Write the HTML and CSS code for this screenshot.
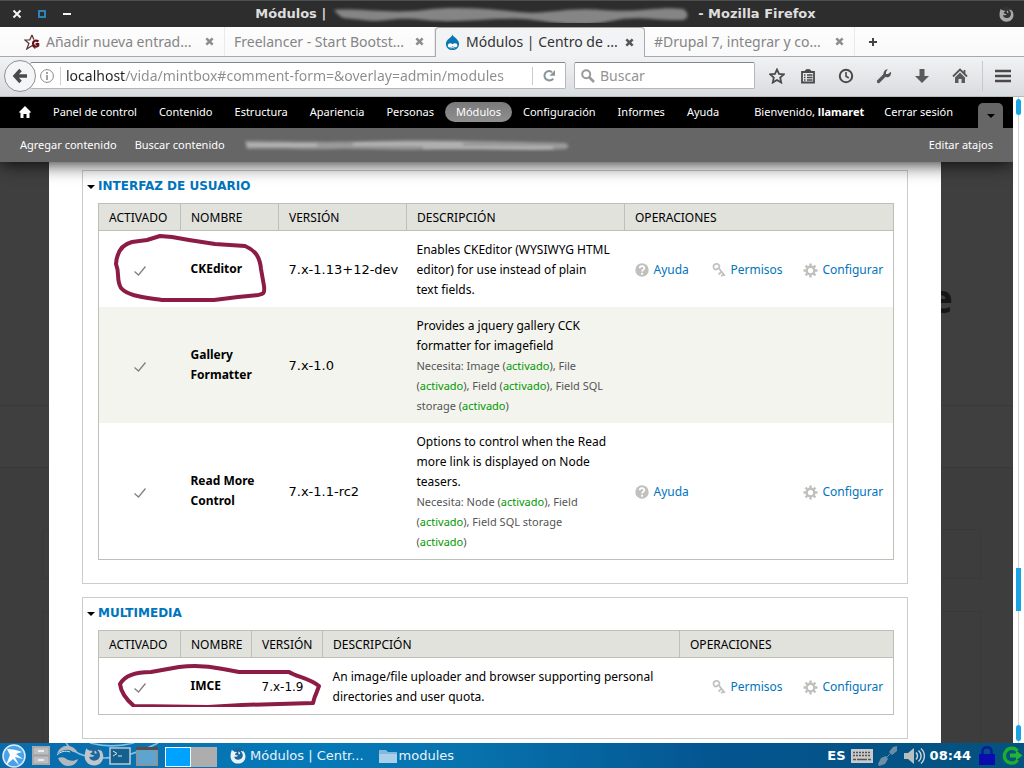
FILE: index.html
```html
<!DOCTYPE html>
<html lang="es">
<head>
<meta charset="utf-8">
<title>Módulos | Mozilla Firefox</title>
<link rel="stylesheet" href="styles.css">
</head>
<body>
<svg class="defs" aria-hidden="true">
  <defs>
    <filter id="soft" x="-5%" y="-60%" width="110%" height="220%"><feGaussianBlur stdDeviation="1.5"/></filter>
    <symbol id="close" viewBox="0 0 10 10"><path d="M1.500 1.500l7 7M8.500 1.500l-7 7" stroke="currentColor" stroke-width="2.800" fill="none"/></symbol>
    <symbol id="fox" viewBox="0 0 20 20">
      <path d="M2.500 2c.5 1.500 1.300 2 2.500 2C7 2.500 8 1 10.500 1 15.500 1 19.300 5.500 19.300 10.500c0 5.200-4 9-9.300 9S.7 15.500.7 10.500C.7 7 1.500 5 2.500 2z" fill="currentColor"/>
      <path d="M6 0C10-1 16 0 17 5c-2-1.500-2.600-1.300-3.500-1 2.700 2.500 3.300 6 1.300 8.500-2 2.600-6.300 2.800-8.300.8-1.300-1.300-1.200-2.300-.7-2.800 1.800.8 3.700.3 4.700-1-1.800-.3-3.500-.2-4.300-1.700.3-1.500 2.300-1 2.300-2.400C7.300 4.300 6 4.500 5 5c0-2 .3-3.500 1-5z" fill="var(--hole)"/>
      <path d="M10.500 4.500c1.500.5 2.500 1.700 2 3-.8.8-2 .2-2-1z" fill="currentColor"/>
    </symbol>
    <symbol id="help" viewBox="0 0 14 14"><circle cx="7" cy="7" r="6.700" fill="#c0c0bd"/><path d="M4.700 5.300C4.700 2.400 9.400 2.500 9.300 5.200 9.200 6.700 7.100 6.700 7.100 8.600M7.100 9.800v1.900" stroke="#fff" stroke-width="1.800" fill="none"/></symbol>
    <symbol id="key" viewBox="0 0 14 16"><path d="M1.500 4.800a3 2.700 0 1 1 5.600 1.100L4 7.600C2.500 7.600 1.500 6.200 1.500 4.800zM7 6.500l5 6.300M9.300 9.600l-2.600 3M11.300 12l-2 2.400M12 12.500l.5 1.500" stroke="#c2c2bf" stroke-width="1.800" fill="none"/></symbol>
    <symbol id="gear" viewBox="0 0 16 16"><circle cx="8" cy="8" r="4.100" stroke="#c0c0bd" stroke-width="2.600" fill="none"/><path d="M8 .5v3M8 12.500v3M.5 8h3M12.500 8h3M2.700 2.700l2.100 2.100M11.200 11.200l2.100 2.100M2.700 13.300l2.100-2.100M11.200 4.800l2.100-2.100" stroke="#c0c0bd" stroke-width="2.600"/></symbol>
  </defs>
</svg>

<header class="titlebar">
  <div class="win-buttons">
    <button aria-label="Cerrar"><svg width="10" height="10" viewBox="0 0 10 10"><path d="M1.500 1.500l7 7M8.500 1.500l-7 7" stroke="#f4f4f4" stroke-width="2"/></svg></button>
    <button aria-label="Maximizar"><svg width="10" height="10" viewBox="0 0 10 10"><path d="M2 2h6v6H2z" stroke="#2d83b8" stroke-width="2" fill="none"/></svg></button>
    <button aria-label="Minimizar"><svg width="10" height="10" viewBox="0 0 10 10"><path d="M1 5h8" stroke="#f4f4f4" stroke-width="2"/></svg></button>
  </div>
  <div class="title">
    <span>Módulos |</span>
    <svg width="364" height="18" viewBox="0 0 360 18" aria-hidden="true"><path filter="url(#soft)" d="M2 5C25 3 60 9 92 5s65-1 95 2 45-5 82-2 60-4 82-1c7 4 5 10 0 11-28 1-45-5-72 1s-45 3-78-1-75 4-108 0-40 3-62 0S12 16 2 5z" fill="#858585"/></svg>
    <span>- Mozilla Firefox</span>
  </div>
  <svg class="fox-mark" width="15" height="15"><use href="#fox"/></svg>
</header>

<nav class="tabs" aria-label="Pestañas">
  <div class="tab"><svg width="16" height="16" viewBox="0 0 16 16"><path d="M8 1L5.800 5.800.8 6l4.100 3.500L2.800 15l5.500-3.500 3 3M8 1l1.800 4.500" stroke="#5b3030" stroke-width="1.200" fill="none"/><path d="M14.500 7.500c-3-2-5.500-.5-5.500 2s3 4 5.200 2.200V10H11.500" stroke="#641018" stroke-width="2.200" fill="none"/></svg><span>Añadir nueva entrad...</span><button aria-label="Cerrar pestaña"><svg width="9" height="9"><use href="#close"/></svg></button></div>
  <div class="tab"><span>Freelancer - Start Bootst...</span><button aria-label="Cerrar pestaña"><svg width="9" height="9"><use href="#close"/></svg></button></div>
  <div class="tab active"><svg width="15" height="17" viewBox="0 0 16 17"><path d="M8 0c.5 3 7 4.500 7 10 0 4-3.200 6.500-7 6.500S1 14 1 10C1 5 7 3.500 8 0z" fill="#0c76b5"/><path d="M3 12c0-3 3-3.500 5-1.600 2-2 5.200-1.500 5.200 1.200 0 2.500-3 2.300-5 .8-2 1.600-5.200 2-5.200-.4z" fill="#fff"/><path d="M6 14.500c1.500-.8 3-.8 4.200 0" stroke="#fff" fill="none"/></svg><span>Módulos | Centro de ...</span><button aria-label="Cerrar pestaña"><svg width="9" height="9"><use href="#close"/></svg></button></div>
  <div class="tab"><span>#Drupal 7, integrar y co...</span><button aria-label="Cerrar pestaña"><svg width="9" height="9"><use href="#close"/></svg></button></div>
  <button class="new-tab" aria-label="Nueva pestaña"><svg width="8" height="8" viewBox="0 0 8 8"><path d="M4 0v8M0 4h8" stroke="#444" stroke-width="2"/></svg></button>
</nav>

<div class="navbar">
  <button class="back" aria-label="Atrás"><svg width="16" height="16" viewBox="0 0 16 16"><path d="M8.500 2L3 8l5.500 6M3.500 8H15" stroke="#4a4a4a" stroke-width="3.400" fill="none"/></svg></button>
  <div class="urlbar">
    <svg width="14" height="14" viewBox="0 0 14 14"><circle cx="7" cy="7" r="6.400" stroke="#8a8a8a" fill="none"/><path d="M7 6v5M7 3v2" stroke="#8a8a8a" stroke-width="1.600"/></svg>
    <input type="text" aria-label="Dirección" value="localhost/vida/mintbox#comment-form=&amp;overlay=admin/modules">
    <button aria-label="Recargar"><svg width="13" height="13" viewBox="0 0 13 13"><path d="M9 3.300C5.500.5 1.500 3 1.500 6.700c0 4.300 5.500 6.300 8.800 3" stroke="#8a959c" stroke-width="2" fill="none"/><path d="M12 1v5.800H6.500z" fill="#8a959c"/></svg></button>
  </div>
  <div class="search">
    <svg width="14" height="14" viewBox="0 0 14 14"><circle cx="5.200" cy="5.200" r="4" stroke="#999" stroke-width="2" fill="none"/><path d="M8 8l5 5" stroke="#999" stroke-width="2.600"/></svg>
    <input type="text" aria-label="Buscar" placeholder="Buscar">
  </div>
  <div class="tools">
    <button aria-label="Marcador"><svg viewBox="0 0 16 16"><path d="M8 1.500l2 4.400 4.800.5-3.600 3.200 1 4.900L8 12l-4.200 2.500 1-4.900L1.200 6.400 6 5.900z" stroke="#4a4a4a" stroke-width="1.800" fill="none"/></svg></button>
    <button aria-label="Lista"><svg viewBox="0 0 16 16"><path d="M2 4h12v10.500H2z" stroke="#4a4a4a" stroke-width="1.800" fill="none"/><path d="M4.500 4c0-4 7-4 7 0z" fill="#4a4a4a"/><path d="M4 7h1.500M7 7h5.500M4 9.500h1.500M7 9.500h5.500M4 12h1.500M7 12h5.500" stroke="#4a4a4a" stroke-width="1.300"/></svg></button>
    <button aria-label="Historial"><svg viewBox="0 0 16 16"><circle cx="8" cy="8" r="6.200" stroke="#4a4a4a" stroke-width="2" fill="none"/><path d="M8 4v4.300l2.800 1.700" stroke="#4a4a4a" stroke-width="1.600" fill="none"/></svg></button>
    <button aria-label="Herramientas"><svg viewBox="0 0 16 16"><path d="M2.500 13.500l6-6" stroke="#555" stroke-width="3.200" stroke-linecap="round"/><path d="M11.800 1.200L10 4v2l2 .1 3-2.300c.5 3.500-1.500 5.700-4.400 5.500L7.500 7.500C7 4 9 1 11.800 1.200z" fill="#555"/></svg></button>
    <button aria-label="Descargas"><svg viewBox="0 0 16 16"><path d="M5.500 1h5v7H15l-7 7-7-7h4.500z" fill="#5a5a5a"/></svg></button>
    <button aria-label="Inicio"><svg viewBox="0 0 16 16"><path d="M1 8.500l7-7 7 7M12.500 2v4" stroke="#555" stroke-width="1.800" fill="none"/><path d="M3 9.500l5-5 5 5V15H9.500v-4h-3v4H3z" fill="#5a5a5a"/></svg></button>
    <button class="menu" aria-label="Menú"><svg viewBox="0 0 16 16"><path d="M0 3h16M0 8h16M0 13h16" stroke="#4a4a4a" stroke-width="2.600"/></svg></button>
  </div>
</div>

<div class="viewport">
  <div class="page">
    <div class="toolbar">
      <ul class="admin-menu">
        <li><a href="#" aria-label="Inicio"><svg width="12" height="12" viewBox="0 0 12 12"><path d="M6 0l6 6-1 1-.5-.5V12H7.500V8h-3v4h-3V6.500L1 7 0 6z" fill="#fff"/></svg></a></li>
        <li><a href="#">Panel de control</a></li>
        <li><a href="#">Contenido</a></li>
        <li><a href="#">Estructura</a></li>
        <li><a href="#">Apariencia</a></li>
        <li><a href="#">Personas</a></li>
        <li><a class="current" href="#">Módulos</a></li>
        <li><a href="#">Configuración</a></li>
        <li><a href="#">Informes</a></li>
        <li><a href="#">Ayuda</a></li>
      </ul>
      <ul class="admin-user">
        <li><a href="#">Bienvenido, <b>llamaret</b></a></li>
        <li><a href="#">Cerrar sesión</a></li>
      </ul>
      <button class="toggle" aria-label="Ocultar atajos"><svg width="8" height="4" viewBox="0 0 8 4"><path d="M0 0h8L4 4z"/></svg></button>
    </div>
    <div class="shortcuts">
      <a href="#">Agregar contenido</a>
      <a href="#">Buscar contenido</a>
      <svg width="328" height="14" viewBox="0 0 328 14" aria-hidden="true"><g filter="url(#soft)"><path d="M2 3C40 3 80 5 130 3s100 0 192 2c5 2 4 5 0 6-50 3-90-2-130 0s-70-1-100 0S40 10 4 11z" fill="#9a9a9a"/><path d="M4 7h70M110 6h110M180 10h130" stroke="#bcbcbc" stroke-width="2.500"/></g></svg>
      <a class="edit" href="#">Editar atajos</a>
    </div>
    <div class="stage">
      <div class="backdrop" aria-hidden="true">
        <span class="band"></span><span class="box box-a"></span><span class="box box-b"></span><span class="letter">e</span>
      </div>
      <main class="overlay">
        <section class="fieldset">
          <h2><a href="#">INTERFAZ DE USUARIO</a></h2>
          <table class="modules ui">
            <colgroup><col class="c-on"><col class="c-name"><col class="c-version"><col><col class="c-help"><col class="c-perm"><col class="c-conf"></colgroup>
            <thead><tr><th>ACTIVADO</th><th>NOMBRE</th><th>VERSIÓN</th><th>DESCRIPCIÓN</th><th colspan="3">OPERACIONES</th></tr></thead>
            <tbody>
              <tr><td class="check"><input type="checkbox" id="m1" checked disabled></td><td><label for="m1">CKEditor</label></td><td class="version">7.x-1.13+12-dev</td><td>Enables CKEditor (WYSIWYG HTML editor) for use instead of plain text&nbsp;fields.</td><td class="op"><a href="#"><svg width="14" height="14"><use href="#help"/></svg>Ayuda</a></td><td class="op"><a href="#"><svg width="14" height="16"><use href="#key"/></svg>Permisos</a></td><td class="op"><a href="#"><svg width="15" height="15"><use href="#gear"/></svg>Configurar</a></td></tr>
              <tr><td class="check"><input type="checkbox" id="m2" checked disabled></td><td><label for="m2">Gallery Formatter</label></td><td class="version">7.x-1.0</td><td>Provides a jquery gallery CCK formatter for imagefield<div class="needs">Necesita: Image (<i>activado</i>), File (<i>activado</i>), Field (<i>activado</i>), Field SQL storage (<i>activado</i>)</div></td><td></td><td></td><td></td></tr>
              <tr><td class="check"><input type="checkbox" id="m3" checked disabled></td><td><label for="m3">Read More Control</label></td><td class="version">7.x-1.1-rc2</td><td>Options to control when the Read more link is displayed on Node teasers.<div class="needs">Necesita: Node (<i>activado</i>), Field (<i>activado</i>), Field SQL storage (<i>activado</i>)</div></td><td class="op"><a href="#"><svg width="14" height="14"><use href="#help"/></svg>Ayuda</a></td><td></td><td class="op"><a href="#"><svg width="15" height="15"><use href="#gear"/></svg>Configurar</a></td></tr>
            </tbody>
          </table>
          <svg class="mark mark-a" width="154" height="70" viewBox="0 0 154 70" aria-hidden="true"><path d="M46 3l12 1 17 3 26 4 30 2c12 5 15 13 16 23l3 17c1 8-1 8-6 9l-20 2-24 3-52 0c-20-3-34-4-41-12-5-8-1-14-5-24 1-14 8-20 16-22l15-2z"/></svg>
        </section>
        <section class="fieldset">
          <h2><a href="#">MULTIMEDIA</a></h2>
          <table class="modules media">
            <colgroup><col class="c-on"><col class="c-name"><col class="c-version"><col><col class="c-help"><col class="c-perm"><col class="c-conf"></colgroup>
            <thead><tr><th>ACTIVADO</th><th>NOMBRE</th><th>VERSIÓN</th><th>DESCRIPCIÓN</th><th colspan="3">OPERACIONES</th></tr></thead>
            <tbody>
              <tr><td class="check"><input type="checkbox" id="m4" checked disabled></td><td><label for="m4">IMCE</label></td><td class="version">7.x-1.9</td><td>An image/file uploader and browser supporting personal directories and user quota.</td><td></td><td class="op"><a href="#"><svg width="14" height="16"><use href="#key"/></svg>Permisos</a></td><td class="op"><a href="#"><svg width="15" height="15"><use href="#gear"/></svg>Configurar</a></td></tr>
            </tbody>
          </table>
          <svg class="mark mark-b" width="206" height="44" viewBox="0 0 206 44" aria-hidden="true"><path d="M3 21C8 12 20 9 34 9l28-5c14-2 30-1 44 2l16 3 50 0c8 5 20 6 30 14l-3 8c-2 4-2 6-3 9l-34 1-37 1-34 2-74-1C11 38 4 30 3 21z"/></svg>
        </section>
      </main>
    </div>
  </div>
  <div class="scrollbar" aria-hidden="true"><span class="cap"></span><span class="thumb"></span><span class="cap"></span></div>
</div>

<footer class="taskbar">
  <svg class="waves" width="170" height="25" viewBox="0 0 170 25" aria-hidden="true"><path d="M66 0c12 18 50 22 92 0M90 0c15 4 32 3 44 0" stroke="#7ec0e6" stroke-width="1.600" fill="none"/></svg>
  <div class="launchers">
    <button aria-label="Menú de inicio"><svg width="24" height="24" viewBox="0 0 24 24"><circle cx="12" cy="12" r="11" fill="#4aa3ea" stroke="#d8ecfb" stroke-width="1.500"/><path d="M5 5c5 0 10 1 15 3l-6 2 7 5-8-2 4 8-6-6-7 6 4-10z" fill="#fff"/></svg></button>
    <button aria-label="Archivos"><svg width="20" height="21" viewBox="0 0 20 21"><path d="M1 1h18v19H1z" fill="#b0b3b5"/><path d="M2 2h16v8H2zM2 11h16v8H2z" fill="#bbbdbf" stroke="#999da0"/><path d="M7 6h6M7 15h6" stroke="#ececec" stroke-width="2"/></svg></button>
    <button aria-label="Navegador"><svg width="23" height="22" viewBox="0 0 23 22"><path d="M1 9C3 3 8 0 13 1c5 1 8 4 9 8-2-2-3-2-5-2C12 3 6 5 1 9z" fill="#b3b9bd"/><path d="M2 13c3-1 5-1 7 0 4 3 8 4 13 1-1 4-5 7-10 7-4 0-8-3-10-8z" fill="#b3b9bd"/><path d="M1 10c3-3 8-5 13-3" stroke="#dfe4e7" fill="none"/></svg></button>
    <button class="fox-icon" aria-label="Firefox"><svg width="20" height="20"><use href="#fox"/></svg></button>
    <button aria-label="Terminal"><svg width="22" height="18" viewBox="0 0 22 18"><path d="M1 1h20v16H1z" fill="#14608f" stroke="#b9c7d0" stroke-width="1.600"/><path d="M4 4l4 2.500L4 9M9 9h4" stroke="#dfe6ea" fill="none"/></svg></button>
    <button aria-label="Escritorio"><svg width="22" height="20" viewBox="0 0 22 20"><path d="M1 3h20v16H1z" fill="#5fa3cf" stroke="#8d9499" stroke-width="2"/><path d="M0 1h22v3H0z" fill="#5a4c48"/></svg></button>
  </div>
  <div class="pager"><button class="on" aria-label="Escritorio 1"></button><button aria-label="Escritorio 2"></button></div>
  <button class="task fox-icon"><svg width="16" height="16"><use href="#fox"/></svg>Módulos | Centr...</button>
  <button class="task folder"><svg width="18" height="14" viewBox="0 0 18 14"><path d="M0 1h7l2 2h9v11H0z" fill="#84b9dd"/><path d="M0 5h18v9H0z" fill="#a9d0ea"/></svg>modules</button>
  <div class="tray">
    <span>ES</span>
    <svg width="22" height="14" viewBox="0 0 22 14"><path d="M0 0h22v14H0z" fill="#c8cacb"/><path d="M2 3.500h18M2 6.500h18" stroke="#555" stroke-width="1.600" stroke-dasharray="2 1"/><path d="M2 10.500h3M6 10.500h10M17 10.500h3" stroke="#555" stroke-width="1.600"/></svg>
    <svg width="20" height="20" viewBox="0 0 20 20"><path d="M19 0v5l-5 4-3-3 4-5zM8 10l2 3-3 5-6 2-1-2 3-6z" fill="#6d8fa6"/><path d="M7 13l5-5" stroke="#6d8fa6"/></svg>
    <svg width="22" height="18" viewBox="0 0 22 18"><path d="M1 6h4l6-5v16l-6-5H1z" fill="#b9bec1"/><path d="M13 5.500c2 2 2 5 0 7M15.500 3.500c3.500 3 3.500 8 0 11M18 1.500c4.500 4 4.500 11 0 15" stroke="#c9d2d8" stroke-width="1.500" fill="none"/></svg>
    <time>08:44</time>
    <svg class="lock" width="16" height="19" viewBox="0 0 16 19"><path d="M3.500 9V5c0-5 9-5 9 0v4" stroke="#0a1a9c" stroke-width="2.600" fill="none"/><path d="M0 8h16v11H0z" fill="#0a0cae"/></svg>
    <svg width="21" height="19" viewBox="0 0 21 19"><path d="M15.500 5C12.500 1 6 1.500 3.500 6s-.500 10 5 11c3 .5 5.500-.5 7-3" stroke="#1fae2c" stroke-width="3.400" fill="none"/><path d="M8 7.500h6V4.500l6.500 5-6.500 5v-3H8z" fill="#23b52f"/></svg>
  </div>
</footer>
</body>
</html>
```
FILE: styles.css
```css
* { box-sizing: border-box; }
body {
  margin: 0;
  height: 100vh;
  display: flex;
  flex-direction: column;
  overflow: hidden;
  font-family: "Noto Sans", sans-serif;
  font-size: 12px;
  line-height: 20px;
  color: #000;
}
button { margin: 0; padding: 0; border: 0; background: none; font: inherit; color: inherit; display: flex; align-items: center; justify-content: center; }
input { font: inherit; border: 0; outline: 0; background: none; padding: 0; margin: 0; min-width: 0; }
a { text-decoration: none; color: #0074bd; }
svg { flex: none; display: block; }
ul { list-style: none; margin: 0; padding: 0; }
.defs { position: absolute; width: 0; height: 0; }

.titlebar { flex: none; height: 27px; padding: 0 10px 0 12px; display: flex; align-items: center; background: #2d2d2d; border-top: 1px solid #4a504f; color: #dedede; font: bold 13px/20px "DejaVu Sans", sans-serif; }
.win-buttons { display: flex; gap: 15px; width: 60px; }
.title { flex: 1; display: flex; justify-content: center; align-items: center; gap: 4px; }
.fox-mark { color: #a8a8a8; --hole: #333; }

.tabs { flex: none; height: 30px; display: flex; padding-left: 15px; background: linear-gradient(#fdfdfd, #f9f9fa); border-bottom: 1px solid #a9a9ac; font-size: 14px; color: #858585; }
.tab { width: 210px; height: 29px; padding: 0 10px 0 9px; display: flex; align-items: center; gap: 6px; border-right: 1px solid #eaeaea; }
.tab span { flex: 1; white-space: nowrap; overflow: hidden; }
.tab button { color: #8d8d8d; }
.tab.active { height: 30px; padding-bottom: 1px; background: #f2f3f5; border: 1px solid #a9a9ac; border-bottom: 0; border-radius: 4px 4px 0 0; color: #333; }
.tab.active button { color: #555; }
.new-tab { width: 36px; }

.navbar { flex: none; height: 40px; padding: 0 13px 2px 4px; display: flex; align-items: center; background: linear-gradient(#f1f2f4, #d9dcdf); border-bottom: 1px solid #b9bcbb; font-size: 14px; }
.back { position: relative; z-index: 1; width: 32px; height: 32px; border: 1px solid #909090; border-radius: 50%; background: #f4f5f6; }
.urlbar, .search { height: 27px; display: flex; align-items: center; background: #fff; border: 1px solid #b4b7ba; border-top-color: #85888b; border-radius: 2px; }
.urlbar { flex: 1; margin-left: -6px; padding-left: 9px; }
.urlbar input { flex: 1; margin-left: 6px; padding-left: 5px; border-left: 1px solid #d0d0d0; height: 18px; color: transparent; background: linear-gradient(90deg, #222 59px, #8c8c8c 59px) content-box; -webkit-background-clip: text; background-clip: text; }
.urlbar button { width: 33px; height: 18px; border-left: 1px solid #c8ccd0; }
.search { width: 181px; margin-left: 8px; padding-left: 6px; gap: 5px; }
.search input { flex: 1; color: #333; }
.search input::placeholder { color: #939393; opacity: 1; }
.tools { display: flex; margin-left: 14px; }
.tools button { width: 38px; height: 30px; padding-right: 22px; }
.tools button:first-child { width: 31px; padding-right: 15px; }
.tools svg { width: 16px; height: 16px; }
.tools .menu { width: 29px; padding: 0 0 0 12px; border-left: 1px solid #c6c9cc; margin-left: -8px; }

.viewport { flex: 1; min-height: 0; display: flex; background: #fff; }
.page { flex: 1; display: flex; flex-direction: column; min-width: 0; }
.toolbar { flex: none; height: 31px; padding: 0 10px 1px 19px; display: flex; align-items: center; background: #000; font-size: 11px; }
.toolbar ul { display: flex; gap: 22px; }
.toolbar .admin-user { gap: 20px; }
.toolbar a, .shortcuts a { color: #fff; white-space: nowrap; }
.toolbar a { display: flex; align-items: center; height: 20px; white-space: pre; }
.toolbar .current { padding: 0 11px; margin: 0 -11px; border-radius: 10px; background: linear-gradient(#7a7a7a, #8f8f8f); }
.admin-user { margin-left: auto; }
.toggle { align-self: flex-end; width: 25px; height: 25px; margin: 0 0 -1px 25px; background: #666; border-radius: 5px 5px 0 0; }
.shortcuts { flex: none; position: relative; z-index: 2; height: 34px; padding: 0 20px; display: flex; align-items: center; gap: 18px; background: #666; font-size: 11px; box-shadow: 0 0 20px #000; clip-path: inset(0 0 -30px 0); }
.shortcuts .edit { margin-left: auto; }

.stage { flex: 1; min-height: 0; position: relative; overflow: hidden; background: #3f3f3f; }
.backdrop { position: absolute; inset: 0; }
.band { position: absolute; left: 0; right: 0; top: 243px; height: 63px; border: solid #383838; border-width: 1px 0; box-shadow: 0 300px 0 300px #3d3d3d; clip-path: inset(0 0 -400px 0); }
.box { position: absolute; left: 42px; right: 32px; border: 1px solid #393939; }
.box-a { top: 367px; height: 50px; }
.box-b { top: 449px; height: 200px; }
.letter { position: absolute; right: 60px; top: 111px; font: bold 40px/50px "Noto Sans", sans-serif; color: #161616; }
.overlay { position: relative; margin: 0 72px 0 49px; padding: 8px 33px 0; height: 100%; background: #fff; display: flex; flex-direction: column; gap: 13px; }

.fieldset { flex: none; position: relative; border: 1px solid #ccc; padding: 5px 13px 23px 15px; }
.fieldset h2 { margin: 0 0 7px; font: bold 12px/20px "DejaVu Sans", sans-serif; position: relative; }
.fieldset h2::before { content: ""; position: absolute; left: -11px; top: 9px; border: 4px solid transparent; border-top-color: #000; border-bottom: 0; }
.modules { width: 100%; table-layout: fixed; border-collapse: collapse; border: 1px solid #bebfb9; }
.modules th { height: 27px; padding: 1px 10px 0; text-align: left; font-weight: normal; background: #e1e2dc; border: 1px solid #bebfb9; }
.modules td { padding: 9px 10px 7px; vertical-align: middle; }
.modules tbody tr:nth-child(even) { background: #f3f4ee; }
.c-on { width: 82px; }
.c-perm { width: 91px; }
.c-conf { width: 101px; }
.ui .c-name { width: 98px; }
.ui .c-version { width: 128px; }
.ui .c-help { width: 77px; }
.media .c-name { width: 71px; }
.media .c-version { width: 71px; }
.media .c-help { width: 22px; }
.modules label { font-weight: bold; display: block; padding-bottom: 3px; }
.modules .version { font: 13px/20px "DejaVu Sans", sans-serif; white-space: nowrap; padding-right: 0; }
.media .version { font-size: 12px; }
.needs { font-size: 11px; color: #555; }
.needs i { font-style: normal; color: #090; }
.op a { display: flex; align-items: center; gap: 5px; }
.check input { appearance: none; display: block; width: 14px; height: 12px; margin: 2px auto 0; background: url("data:image/svg+xml,%3Csvg xmlns='http://www.w3.org/2000/svg' viewBox='0 0 14 12'%3E%3Cpath d='M1.500 6.500l4 3.500L12.500 1.500' stroke='%23808080' stroke-width='1.300' fill='none'/%3E%3C/svg%3E"); }
.mark { position: absolute; fill: none; stroke: #8c1c45; stroke-width: 4px; stroke-linejoin: round; }
.mark-a { left: 31px; top: 62px; }
.mark-b { left: 34px; top: 65px; }

.scrollbar { flex: none; width: 11px; padding: 2px 0 2px 3px; display: flex; flex-direction: column; align-items: flex-start; background: linear-gradient(90deg, #fff 5px, #d0d0d0 5px, #d0d0d0 6px, #fff 6px); }
.cap { width: 5px; height: 16px; border-radius: 3px; background: #1ba4e5; }
.thumb { width: 5px; height: 43px; margin: auto 0 114px; background: #1ba4e5; }

.taskbar { flex: none; position: relative; height: 25px; padding-right: 1px; display: flex; align-items: center; background: linear-gradient(90deg, #0a6bab, #0579b8 30%, #0773ae 45%, #045590 70%, #03527f); color: #fff; font: 13px/20px "DejaVu Sans", sans-serif; }
.waves { position: absolute; left: 0; top: 0; }
.launchers { position: relative; display: flex; align-items: center; gap: 5px; padding-left: 2px; }
.fox-icon { color: #c0c6ca; --hole: #1a689e; }
.pager { display: flex; margin: 2px 0 0 7px; height: 20px; }
.pager button { width: 26px; background: #adadad; }
.pager .on { background: #00a2ff; border: 1px solid #fff; }
.task { gap: 4px; padding-left: 13px; color: #e8f3fa; }
.folder { gap: 2px; padding-left: 15px; }
.tray { margin-left: auto; display: flex; align-items: center; gap: 5px; font-weight: bold; }
.lock { margin-left: 3px; margin-right: 2px; }
```
